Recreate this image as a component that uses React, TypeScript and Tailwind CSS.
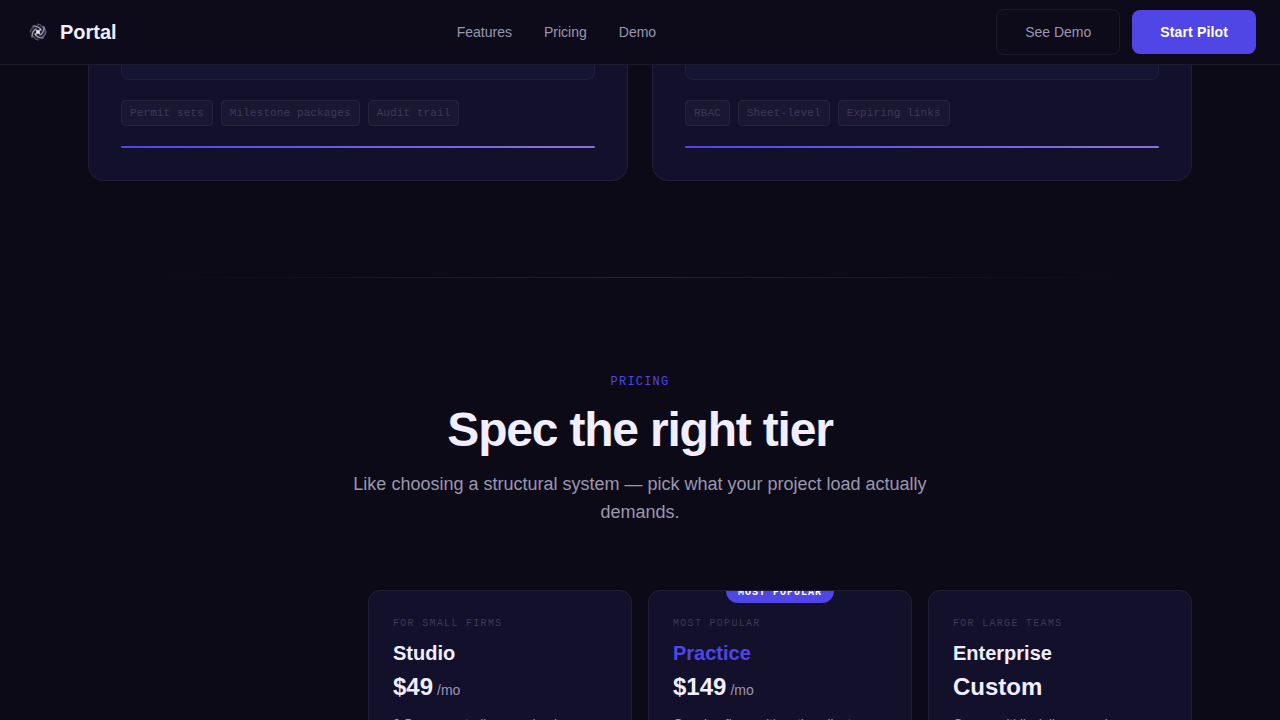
const NAV_LINKS = ["Features", "Pricing", "Demo"];

const FEATURES = [
  { id: "packages", tags: ["Permit sets", "Milestone packages", "Audit trail"] },
  { id: "access", tags: ["RBAC", "Sheet-level", "Expiring links"] },
];

const TIERS = [
  {
    name: "Studio",
    eyebrow: "For small firms",
    price: "$49",
    period: "/mo",
    description: "2-5 person studios, one lead",
    popular: false,
  },
  {
    name: "Practice",
    eyebrow: "Most popular",
    price: "$149",
    period: "/mo",
    description: "Growing firms with active client",
    popular: true,
  },
  {
    name: "Enterprise",
    eyebrow: "For large teams",
    price: "Custom",
    period: "",
    description: "Orgs, multidisciplinary work",
    popular: false,
  },
];

function Logo() {
  return (
    <svg viewBox="0 0 28 28" className="size-7" fill="none" aria-hidden="true">
      <circle cx="14" cy="14" r="8" fill="#25223a" />
      <path d="M19 8C23 12 22 17 18 20" stroke="#4f4788" strokeWidth="1.6" />
      <g stroke="#aba7a8" strokeWidth="1.2" strokeLinecap="round">
        <path d="M9 8C13 8 16 10 17 12" />
        <path d="M20 9C20 13 18 16 16 17" />
        <path d="M19 20C15 20 12 18 11 16" />
        <path d="M8 19C8 15 10 12 12 11" />
      </g>
      <g stroke="#6a6568" strokeWidth="1" strokeLinecap="round">
        <path d="M14 6C16 6 18 8 19 10" />
        <path d="M14 22C12 22 10 20 9 18" />
        <path d="M6 14C6 12 8 10 10 9" />
        <path d="M22 14C22 16 20 18 18 19" />
      </g>
      <path d="M11 17L17 11M12 12L16 16" stroke="#c9c6ce" strokeWidth="1.1" />
      <circle cx="14" cy="14" r="1.8" fill="#f4f2f7" />
    </svg>
  );
}

function Header() {
  return (
    <header className="relative z-10 flex h-[65px] shrink-0 items-center justify-between border-b border-[#1d1a2c] bg-[#0d0a1a] px-6">
      <a href="#top" className="flex items-center gap-2 text-xl font-bold text-[#f0eeff]">
        <Logo />
        Portal
      </a>
      <nav className="flex gap-8 text-sm text-[#9b97b0]" aria-label="Main">
        {NAV_LINKS.map((link) => (
          <a key={link} href={`#${link.toLowerCase()}`}>
            {link}
          </a>
        ))}
      </nav>
      <div className="flex items-center gap-3 text-sm">
        <button type="button" className="h-[46px] rounded-lg border border-[#1d1a2c] px-7 text-[#9b97b0]">
          See Demo
        </button>
        <button type="button" className="h-11 rounded-lg bg-[#4f46e5] px-7 font-bold tracking-[0.01em] text-white">
          Start Pilot
        </button>
      </div>
    </header>
  );
}

export default function App() {
  return (
    <div
      id="top"
      className="flex h-screen flex-col overflow-hidden bg-[#0d0a17] font-['Liberation_Sans',Arial,sans-serif] text-[#f0eeff]"
    >
      <Header />

      <main className="px-8">
        <section id="features" className="mx-auto grid max-w-[1104px] grid-cols-2 gap-6">
          {FEATURES.map((feature) => (
            <article
              key={feature.id}
              className="rounded-b-2xl border border-t-0 border-[#211e35] bg-[#13102b] px-8 pb-8"
            >
              <div className="h-[15px] rounded-b-lg border border-t-0 border-[#1b1d3c] bg-[#161435]" />
              <ul className="mt-5 flex gap-2">
                {feature.tags.map((tag) => (
                  <li
                    key={tag}
                    className="rounded-sm border border-[#26233b] bg-[#1a1733] px-2 py-1 font-['Liberation_Mono',monospace] text-[11px] leading-4 tracking-[0.01em] text-[#3d3955]"
                  >
                    {tag}
                  </li>
                ))}
              </ul>
              <div className="mt-5 h-0.5 rounded-full bg-linear-to-r from-[#4f46e5] to-[#8b6fe0]" />
            </article>
          ))}
        </section>

        <hr className="mx-auto mt-24 h-px max-w-[960px] border-0 bg-linear-to-r from-transparent via-[#262238] to-transparent" />

        <section id="pricing" className="mx-auto max-w-[1104px] pt-24">
          <div className="mx-auto flex max-w-[600px] flex-col items-center text-center">
            <p className="font-['Liberation_Mono',monospace] text-xs leading-4 tracking-widest text-[#4f46e5] uppercase">
              Pricing
            </p>
            <h2 className="mt-4 text-5xl leading-none font-bold tracking-tight">Spec the right tier</h2>
            <p className="mt-4 text-lg leading-7 text-[#9b97b0]">
              Like choosing a structural system — pick what your project load actually demands.
            </p>
          </div>

          <div className="mt-16 grid grid-cols-4 gap-4">
            {TIERS.map((tier) => (
              <article
                key={tier.name}
                className="relative overflow-hidden rounded-xl border border-[#211e35] bg-[#13102b] p-6 first:col-start-2"
              >
                {tier.popular && (
                  <span className="absolute -top-3 left-1/2 -translate-x-1/2 rounded-full bg-[#4f46e5] px-3 pt-1.5 pb-0.5 font-['Liberation_Mono',monospace] text-[10px] leading-4 font-bold tracking-widest whitespace-nowrap text-white uppercase">
                    Most Popular
                  </span>
                )}
                <p className="font-['Liberation_Mono',monospace] text-[10px] leading-[18px] tracking-[0.13em] text-[#3d3955] uppercase">
                  {tier.eyebrow}
                </p>
                <h3 className={`mt-1.5 text-xl leading-7 font-bold ${tier.popular ? "text-[#4f46e5]" : ""}`}>
                  {tier.name}
                </h3>
                <p className="mt-1 text-2xl leading-8 font-bold">
                  {tier.price}
                  {tier.period && (
                    <span className="ml-1 text-sm font-normal text-[#9b97b0]">{tier.period}</span>
                  )}
                </p>
                <p className="mt-3 text-[13px] leading-[18px] text-[#9b97b0]">{tier.description}</p>
              </article>
            ))}
          </div>
        </section>
      </main>
    </div>
  );
}
